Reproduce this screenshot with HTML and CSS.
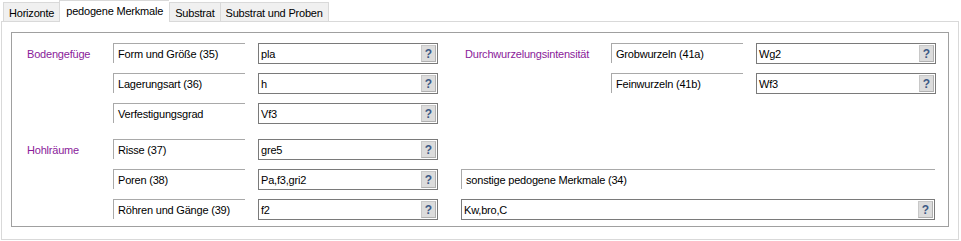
FILE: index.html
```html
<!DOCTYPE html>
<html lang="de">
<head>
<meta charset="utf-8">
<title>pedogene Merkmale</title>
<link rel="stylesheet" href="styles.css">
</head>
<body>
<div class="tabs">
  <div class="tab">Horizonte</div>
  <div class="tab active">pedogene Merkmale</div>
  <div class="tab">Substrat</div>
  <div class="tab">Substrat und Proben</div>
</div>
<div class="panel">
  <div class="group">
    <div class="grid">
      <div class="sec c1 r1">Bodengefüge</div>
      <div class="lbl c2 r1">Form und Größe (35)</div>
      <div class="inp c4 r1"><span>pla</span><span class="q">?</span></div>
      <div class="lbl c2 r2">Lagerungsart (36)</div>
      <div class="inp c4 r2"><span>h</span><span class="q">?</span></div>
      <div class="lbl c2 r3">Verfestigungsgrad</div>
      <div class="inp c4 r3"><span>Vf3</span><span class="q">?</span></div>

      <div class="sec c6 r1 secr">Durchwurzelungsintensität</div>
      <div class="lbl c7 r1">Grobwurzeln (41a)</div>
      <div class="inp c9 r1"><span>Wg2</span><span class="q">?</span></div>
      <div class="lbl c7 r2">Feinwurzeln (41b)</div>
      <div class="inp c9 r2"><span>Wf3</span><span class="q">?</span></div>
    </div>
    <div class="grid">
      <div class="sec c1 r1">Hohlräume</div>
      <div class="lbl c2 r1">Risse (37)</div>
      <div class="inp c4 r1"><span>gre5</span><span class="q">?</span></div>
      <div class="lbl c2 r2">Poren (38)</div>
      <div class="inp c4 r2"><span>Pa,f3,gri2</span><span class="q">?</span></div>
      <div class="lbl c2 r3">Röhren und Gänge (39)</div>
      <div class="inp c4 r3"><span>f2</span><span class="q">?</span></div>

      <div class="lbl wide r2">sonstige pedogene Merkmale (34)</div>
      <div class="inp wide r3"><span>Kw,bro,C</span><span class="q">?</span></div>
    </div>
  </div>
</div>
</body>
</html>
```

FILE: styles.css
```css
html, body {
  margin: 0;
  padding: 0;
  background: #ffffff;
}
body {
  font-family: "Liberation Sans", Arial, sans-serif;
  font-size: 11px;
  letter-spacing: -0.2px;
  color: #000000;
  width: 961px;
  height: 241px;
  overflow: hidden;
}
.tabs {
  display: flex;
  align-items: flex-end;
  height: 21px;
  padding-left: 3px;
}
.tab {
  box-sizing: border-box;
  height: 19px;
  border: 1px solid #d9d9d9;
  border-bottom: none;
  border-right: none;
  background: #f0f0f0;
  padding: 2px 5px 0 5px;
  display: flex;
  align-items: center;
  white-space: nowrap;
}
.tab:last-child {
  border-right: 1px solid #d9d9d9;
}
.tab.active {
  height: 22px;
  margin-bottom: -1px;
  background: #ffffff;
  padding: 0 6px 2px 6px;
  position: relative;
  z-index: 1;
  border-right: none;
}
.panel {
  box-sizing: border-box;
  height: 219px;
  margin: 0 2px 0 1px;
  border: 1px solid #d9d9d9;
  padding: 10px 9px 0 9px;
  background: #ffffff;
}
.group {
  box-sizing: border-box;
  height: 195px;
  border: 1px solid #a0a0a0;
  padding: 10px 0 0 0;
  display: flex;
  flex-direction: column;
  gap: 15px;
}
.grid {
  display: grid;
  grid-template-columns: 101px 132px 13px 180px 23px 150px 132px 13px 180px;
  grid-template-rows: 21px 21px 21px;
  row-gap: 9px;
}
.c1 { grid-column: 1; }
.c2 { grid-column: 2; }
.c4 { grid-column: 4; }
.c6 { grid-column: 6; }
.c7 { grid-column: 7; }
.c9 { grid-column: 9; }
.wide { grid-column: 6 / 10; margin-right: 1px; }
.r1 { grid-row: 1; }
.r2 { grid-row: 2; }
.r3 { grid-row: 3; }
.sec {
  color: #8a1a9a;
  padding-left: 15px;
  display: flex;
  align-items: center;
  white-space: nowrap;
}
.secr {
  padding-left: 4px;
}
.lbl {
  box-sizing: border-box;
  height: 20px;
  border-top: 1px solid #a9a9a9;
  border-left: 1px solid #a9a9a9;
  padding-left: 4px;
  display: flex;
  align-items: center;
  white-space: nowrap;
}
.inp {
  box-sizing: border-box;
  height: 21px;
  border: 1px solid #7a7a7a;
  padding-left: 2px;
  display: flex;
  align-items: center;
  justify-content: space-between;
  white-space: nowrap;
  background: #ffffff;
}
.q {
  box-sizing: border-box;
  width: 15px;
  height: 17px;
  margin-right: 1px;
  background: #dcdcdc;
  border: 1px solid #b0b0b0;
  border-top-color: #c8c8c8;
  border-left-color: #c8c8c8;
  color: #3d5a86;
  font-weight: bold;
  font-size: 12px;
  letter-spacing: 0;
  display: flex;
  align-items: center;
  justify-content: center;
}
```
